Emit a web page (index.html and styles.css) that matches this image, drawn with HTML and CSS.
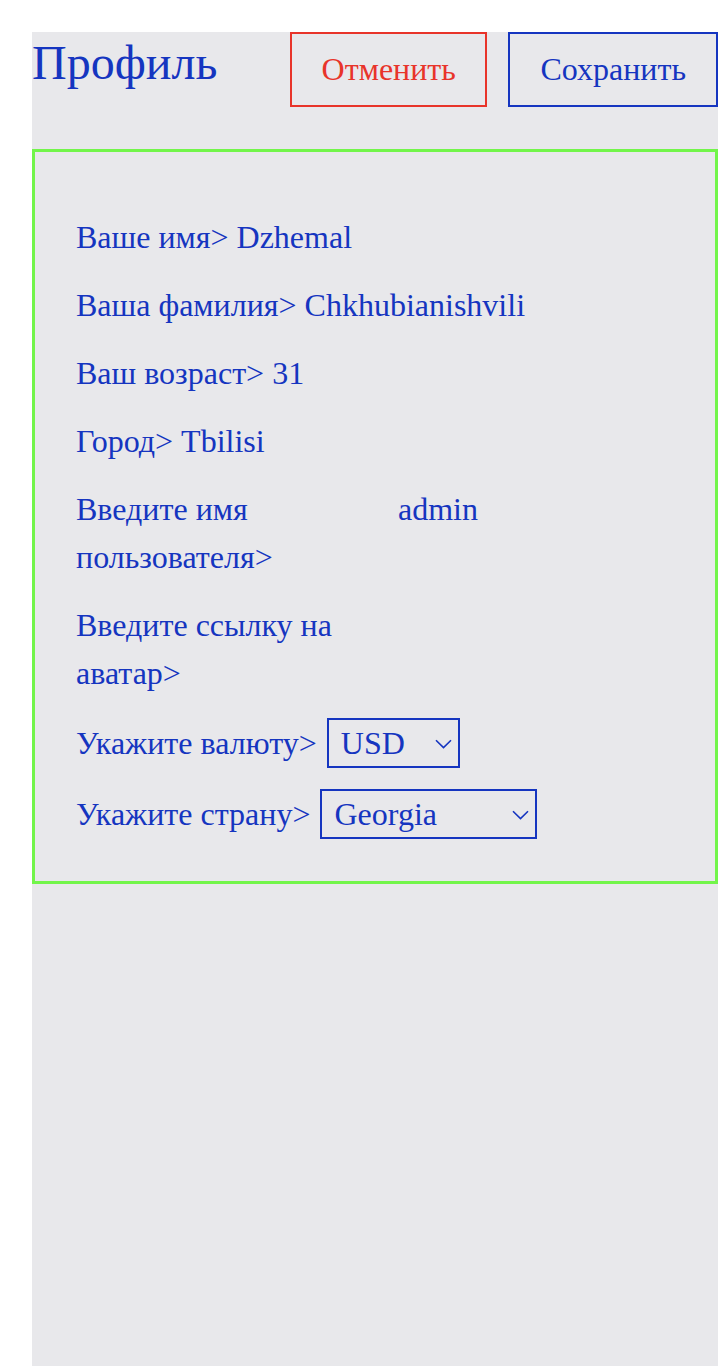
FILE: index.html
```html
<!DOCTYPE html>
<html lang="ru">
<head>
<meta charset="utf-8">
<title>Профиль</title>
<link rel="stylesheet" href="styles.css">
</head>
<body>
<div class="page">
  <header class="header">
    <h1 class="title">Профиль</h1>
    <div class="actions">
      <button class="btn btn-cancel" type="button">Отменить</button>
      <button class="btn btn-save" type="button">Сохранить</button>
    </div>
  </header>
  <section class="card">
    <div class="row"><span class="label">Ваше имя&gt;</span> <span class="value">Dzhemal</span></div>
    <div class="row"><span class="label">Ваша фамилия&gt;</span> <span class="value">Chkhubianishvili</span></div>
    <div class="row"><span class="label">Ваш возраст&gt;</span> <span class="value">31</span></div>
    <div class="row"><span class="label">Город&gt;</span> <span class="value">Tbilisi</span></div>
    <div class="row row-field">
      <label class="field-label" for="username">Введите имя пользователя&gt;</label>
      <input class="field-input" id="username" type="text" value="admin">
    </div>
    <div class="row row-field">
      <label class="field-label" for="avatar">Введите ссылку на аватар&gt;</label>
      <input class="field-input" id="avatar" type="text" value="">
    </div>
    <div class="row row-select">
      <label class="select-label" for="currency">Укажите валюту&gt;</label>
      <div class="select-wrap select-currency">
        <select class="select" id="currency">
          <option>USD</option>
          <option>EUR</option>
          <option>GEL</option>
        </select>
        <svg class="chevron" width="17" height="10" viewBox="0 0 17 10"><path d="M1 1.2 L8.5 8.6 L16 1.2" fill="none" stroke="#1535c0" stroke-width="1.6"/></svg>
      </div>
    </div>
    <div class="row row-select">
      <label class="select-label" for="country">Укажите страну&gt;</label>
      <div class="select-wrap select-country">
        <select class="select" id="country">
          <option>Georgia</option>
          <option>Ukraine</option>
          <option>Armenia</option>
        </select>
        <svg class="chevron" width="17" height="10" viewBox="0 0 17 10"><path d="M1 1.2 L8.5 8.6 L16 1.2" fill="none" stroke="#1535c0" stroke-width="1.6"/></svg>
      </div>
    </div>
  </section>
</div>
</body>
</html>
```

FILE: styles.css
```css
html, body {
  margin: 0;
  padding: 0;
  background: #ffffff;
}

body {
  font-family: "Liberation Serif", "Times New Roman", serif;
  color: #1535c0;
}

.page {
  margin: 32px 0 0 32px;
  width: 686px;
  min-height: 1334px;
  background: #e8e8eb;
}

.header {
  display: flex;
  justify-content: space-between;
  align-items: flex-start;
}

.title {
  margin: 3px 0 0 0;
  font-size: 48px;
  font-weight: normal;
  line-height: 56px;
  color: #1535c0;
}

.actions {
  display: flex;
  gap: 21px;
}

.btn {
  font-family: "Liberation Serif", "Times New Roman", serif;
  font-size: 32px;
  line-height: 37px;
  height: 75px;
  padding: 17px 29.5px;
  background: transparent;
  border: 2px solid;
  border-radius: 0;
  box-sizing: border-box;
  cursor: pointer;
}

.btn-cancel {
  color: #e8342a;
  border-color: #e8342a;
}

.btn-save {
  color: #1535c0;
  border-color: #1535c0;
  padding: 17px 30px;
}

.card {
  margin-top: 42px;
  border: 3px solid #72f54a;
  padding: 61px 40px 42px 41px;
  display: flex;
  flex-direction: column;
  gap: 20px;
  font-size: 32px;
  line-height: 48px;
}

.row {
  line-height: 48px;
}

.row-field {
  display: flex;
  align-items: flex-start;
}

.field-label {
  flex: 0 0 300px;
}

.field-input {
  flex: 0 0 auto;
  width: 250px;
  height: 48px;
  margin: 0;
  padding: 0 0 0 22px;
  border: none;
  outline: none;
  background: transparent;
  font-family: "Liberation Serif", "Times New Roman", serif;
  font-size: 32px;
  line-height: 48px;
  color: #1535c0;
}

.row-select {
  display: flex;
  align-items: center;
  min-height: 51px;
  gap: 10px;
}

.select-wrap {
  position: relative;
  height: 50px;
}

.select-currency {
  width: 133px;
}

.select-country {
  width: 217px;
}

.select {
  appearance: none;
  -webkit-appearance: none;
  width: 100%;
  height: 50px;
  box-sizing: border-box;
  margin: 0;
  padding: 0 30px 0 12px;
  border: 2px solid #1535c0;
  border-radius: 0;
  background: transparent;
  font-family: "Liberation Serif", "Times New Roman", serif;
  font-size: 32px;
  line-height: 46px;
  color: #1535c0;
}

.chevron {
  position: absolute;
  right: 8px;
  top: 21px;
  pointer-events: none;
}
```
